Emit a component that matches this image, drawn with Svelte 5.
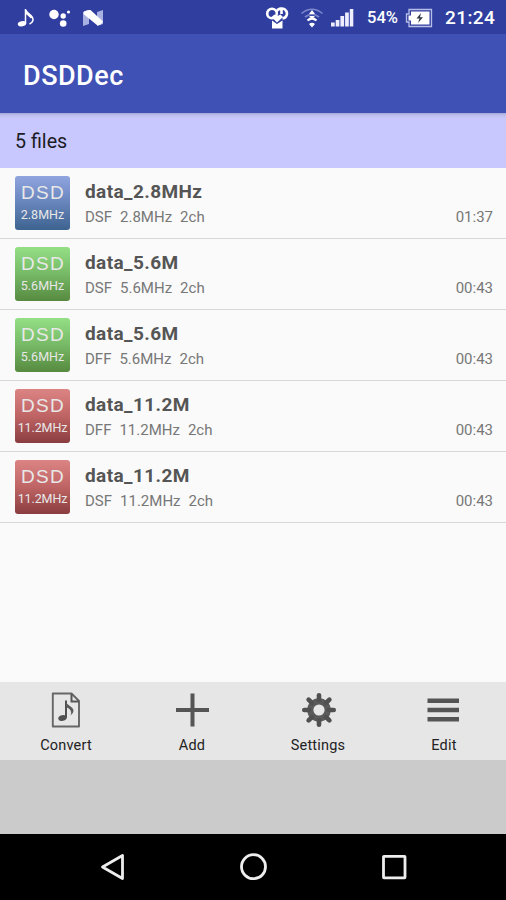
<script lang="ts">
  type Track = {
    name: string;
    format: string;
    rate: string;
    time: string;
    color: string;
  };

  const tracks: Track[] = [
    { name: "data_2.8MHz", format: "DSF", rate: "2.8MHz", time: "01:37", color: "blue" },
    { name: "data_5.6M", format: "DSF", rate: "5.6MHz", time: "00:43", color: "green" },
    { name: "data_5.6M", format: "DFF", rate: "5.6MHz", time: "00:43", color: "green" },
    { name: "data_11.2M", format: "DFF", rate: "11.2MHz", time: "00:43", color: "red" },
    { name: "data_11.2M", format: "DSF", rate: "11.2MHz", time: "00:43", color: "red" },
  ];

  const teeth = [0, 45, 90, 135, 180, 225, 270, 315];
</script>

<main>
  <div class="status">
    <svg class="note" width="18" height="20" viewBox="0 0 18 20">
      <ellipse cx="5" cy="15.7" rx="4.3" ry="2.6" fill="#fff" transform="rotate(-12 5 15.7)" />
      <path d="M8.500 15.500V1C9 5.500 16 7 16 11.500C16 13.500 14.500 15 12.500 16M8.500 4.500L14.500 10" fill="none" stroke="#fff" stroke-width="1.500" />
    </svg>
    <svg class="dots" width="24" height="20" viewBox="0 0 24 20">
      <circle cx="6" cy="6.500" r="4.700" fill="#fff" />
      <circle cx="15.200" cy="8" r="2.700" fill="#fff" />
      <circle cx="15.200" cy="15.500" r="3.300" fill="#fff" />
      <circle cx="20.500" cy="4" r="1.600" fill="#fff" />
    </svg>
    <svg class="nougat" width="22" height="18" viewBox="0 0 22 18">
      <path d="M1 3L7 1V15L1 17ZM15 3L21 1V15L15 17Z" fill="#a9b0e2" />
      <path d="M2 2.500Q5 .5 8.500 1L21 12.500Q19.500 16 15.500 16.500L1.500 5Z" fill="#fff" />
    </svg>
    <span class="spacer"></span>
    <svg class="badge" width="24" height="24" viewBox="0 0 24 24">
      <g fill="none" stroke="#fff" stroke-width="2.600">
        <circle cx="7" cy="7.500" r="4.800" />
        <path d="M11.500 5.500C13 2.500 17 1.500 20 3.500C23.500 6.500 22 12 17.500 12.500M16.500 3V8" />
      </g>
      <path d="M6.500 11L9.500 8.500L12.500 10L15.500 8.500L18 11L12 16.500Z" fill="#fff" />
      <path d="M7 14.500L12 18L17.500 14.500V22.500H7Z" fill="#fff" />
    </svg>
    <svg class="wifi" width="24" height="20" viewBox="0 0 24 20">
      <path d="M1.500 5.500Q12-3 22.500 5.500M5 9Q12 3.500 19 9" fill="none" stroke="#7e88cb" stroke-width="1.600" />
      <path d="M7.500 12.500Q12 8.500 16.500 12.500" fill="none" stroke="#fff" stroke-width="2.200" />
      <path d="M9 16L12 19.500L15 16Q12 13.500 9 16ZM9 6L12 2L15 6ZM9 8H15L12 11Z" fill="#fff" />
    </svg>
    <svg class="signal" width="23" height="19" viewBox="0 0 23 19">
      <path d="M0 14.500H3.700V18.500H0ZM4.700 12H8.400V18.500H4.700ZM9.400 8H13.100V18.500H9.400ZM14.100 4.500H17.800V18.500H14.100ZM18.800 1H22.300V18.500H18.800Z" fill="#eef" />
    </svg>
    <span class="percent">54%</span>
    <svg class="battery" width="28" height="20" viewBox="0 0 28 20">
      <path d="M4 1.500H26.500V18.500H4V14H1.500V6H4Z" fill="none" stroke="#b7bde7" stroke-width="1.300" />
      <path d="M6 3.500H24.500V16.500H6V12.500H3.500V7.500H6Z" fill="#fff" />
      <path d="M16 5L11.500 10.500H14.500L13 15L18 9.300H15Z" fill="#303845" />
    </svg>
    <span class="clock">21:24</span>
  </div>

  <header>DSDDec</header>
  <div class="count">5 files</div>

  <ul>
    {#each tracks as track}
      <li>
        <div class="tile {track.color}">
          <span class="dsd">DSD</span>
          <span class="rate" class:long={track.rate.length > 6}>{track.rate}</span>
        </div>
        <div class="info">
          <div class="name">{track.name}</div>
          <div class="detail">
            <span>{track.format}</span>
            <span>{track.rate}</span>
            <span>2ch</span>
            <span class="time">{track.time}</span>
          </div>
        </div>
      </li>
    {/each}
  </ul>

  <nav class="tools">
    <div class="tool">
      <svg width="36" height="36" viewBox="0 0 36 36">
        <path d="M4.800 1.500H23.500L31 9V34.500H4.800Z" fill="none" stroke="#666" stroke-width="1.900" stroke-linejoin="round" />
        <path d="M23.500 2V9.500H31" fill="none" stroke="#555" stroke-width="2" />
        <ellipse cx="14.500" cy="26" rx="4.300" ry="2.900" fill="#505050" transform="rotate(-12 14.500 26)" />
        <path d="M18 26V8.500" fill="none" stroke="#505050" stroke-width="2" />
        <path d="M18 9C18.500 14 25.500 14 25.500 19Q25.500 21.500 22.500 23.500Q25 17.500 18 15Z" fill="#5a5a5a" />
      </svg>
      <span>Convert</span>
    </div>
    <div class="tool">
      <svg width="36" height="36" viewBox="0 0 36 36">
        <path d="M18.500 1.500V34.500M2 18H35" stroke="#555" stroke-width="4" />
      </svg>
      <span>Add</span>
    </div>
    <div class="tool">
      <svg width="36" height="36" viewBox="0 0 36 36">
        <circle cx="19" cy="18" r="8.700" fill="none" stroke="#5a5a5a" stroke-width="6.200" />
        {#each teeth as angle}
          <path d="M19 8V3.300" stroke="#505050" stroke-width="4.600" stroke-linecap="round" transform="rotate({angle} 19 18)" />
        {/each}
      </svg>
      <span>Settings</span>
    </div>
    <div class="tool">
      <svg width="36" height="36" viewBox="0 0 36 36">
        <path d="M1.500 8.700H33M1.500 18H33M1.500 27.300H33" stroke="#555" stroke-width="4.400" />
      </svg>
      <span>Edit</span>
    </div>
  </nav>

  <div class="ad"></div>

  <nav class="system">
    <svg width="30" height="30" viewBox="0 0 30 30">
      <path d="M4.500 15L24.500 3.500V26.500Z" />
    </svg>
    <svg width="30" height="30" viewBox="0 0 30 30">
      <circle cx="14.500" cy="14.700" r="12" />
    </svg>
    <svg width="30" height="30" viewBox="0 0 30 30">
      <rect x="4.500" y="4.300" width="21.500" height="21.500" rx=".5" />
    </svg>
  </nav>
</main>

<style>
  :global(body) {
    margin: 0;
  }

  main {
    width: 506px;
    height: 900px;
    display: flex;
    flex-direction: column;
    overflow: hidden;
    background: #fafafa;
    font-family: Roboto, sans-serif;
  }

  svg {
    display: block;
    flex: none;
  }

  .status {
    height: 34px;
    display: flex;
    align-items: center;
    box-sizing: border-box;
    padding: 1px 10px 0 17px;
    background: #303f9f;
    color: #fff;
  }
  .dots {
    margin-left: 13px;
  }
  .nougat {
    margin-left: 10px;
  }
  .spacer {
    flex: 1;
  }
  .wifi {
    margin-left: 11px;
  }
  .signal {
    margin-left: 7px;
  }
  .percent {
    width: 33px;
    margin-left: 13px;
    font-size: 16.5px;
    font-weight: 500;
    line-height: 20px;
  }
  .battery {
    margin-left: 5px;
  }
  .clock {
    width: 51px;
    margin-left: 12px;
    font-size: 19px;
    font-weight: 500;
    line-height: 24px;
    letter-spacing: 0.4px;
  }

  header {
    height: 79px;
    line-height: 85px;
    padding-left: 23px;
    background: #3f51b5;
    color: #fff;
    font-size: 27px;
    font-weight: 500;
    letter-spacing: 0.5px;
  }

  .count {
    height: 55px;
    line-height: 58px;
    padding-left: 15px;
    background: linear-gradient(#a9a9d8, #c2c2f5 3px, #c8c8ff 6px);
    color: #1c1c26;
    font-size: 19.7px;
  }

  ul {
    flex: 1;
    margin: 0;
    padding: 0;
    list-style: none;
  }
  li {
    height: 71px;
    display: flex;
    align-items: flex-start;
    box-sizing: border-box;
    padding: 8px 13px 0 15px;
    border-bottom: 1px solid #d8d8d8;
  }

  .tile {
    width: 55px;
    height: 54px;
    display: flex;
    flex-direction: column;
    align-items: center;
    flex: none;
    border-radius: 3px;
    color: #e8e8e8;
    white-space: nowrap;
  }
  .blue {
    background: linear-gradient(#90a5e0, #6784bb 50%, #3d638f);
  }
  .green {
    background: linear-gradient(#94df86, #76b966 50%, #578a40);
  }
  .red {
    background: linear-gradient(#dc8484, #bf6464 50%, #8a3d40);
  }
  .dsd {
    margin-top: 6px;
    font-family: "Liberation Sans", sans-serif;
    font-size: 19px;
    line-height: 22px;
    letter-spacing: 1.3px;
    margin-right: -1px;
  }
  .rate {
    font-size: 12.5px;
    line-height: 21px;
  }
  .long {
    letter-spacing: -0.1px;
  }

  .info {
    flex: 1;
    margin-left: 15px;
    padding-top: 3px;
  }
  .name {
    color: #555;
    font-size: 19px;
    font-weight: 700;
    line-height: 25px;
    letter-spacing: 0.4px;
  }
  .detail {
    display: flex;
    gap: 8px;
    color: #777;
    font-size: 15px;
    line-height: 26px;
  }
  .time {
    margin-left: auto;
  }

  .tools {
    height: 78px;
    display: flex;
    box-sizing: border-box;
    margin-right: -1px;
    padding: 10px 0 0 3px;
    background: #e6e6e6;
  }
  .tool {
    flex: 1;
    display: flex;
    flex-direction: column;
    align-items: center;
    color: #222;
    font-size: 14.5px;
    line-height: 35px;
    letter-spacing: 0.2px;
  }

  .ad {
    height: 74px;
    background: #cbcbcb;
  }

  .system {
    height: 66px;
    display: flex;
    justify-content: space-between;
    align-items: center;
    box-sizing: border-box;
    padding: 0 97px 0 98px;
    background: #000;
    fill: none;
    stroke: #eee;
    stroke-width: 2.8;
    stroke-linejoin: round;
  }
</style>
